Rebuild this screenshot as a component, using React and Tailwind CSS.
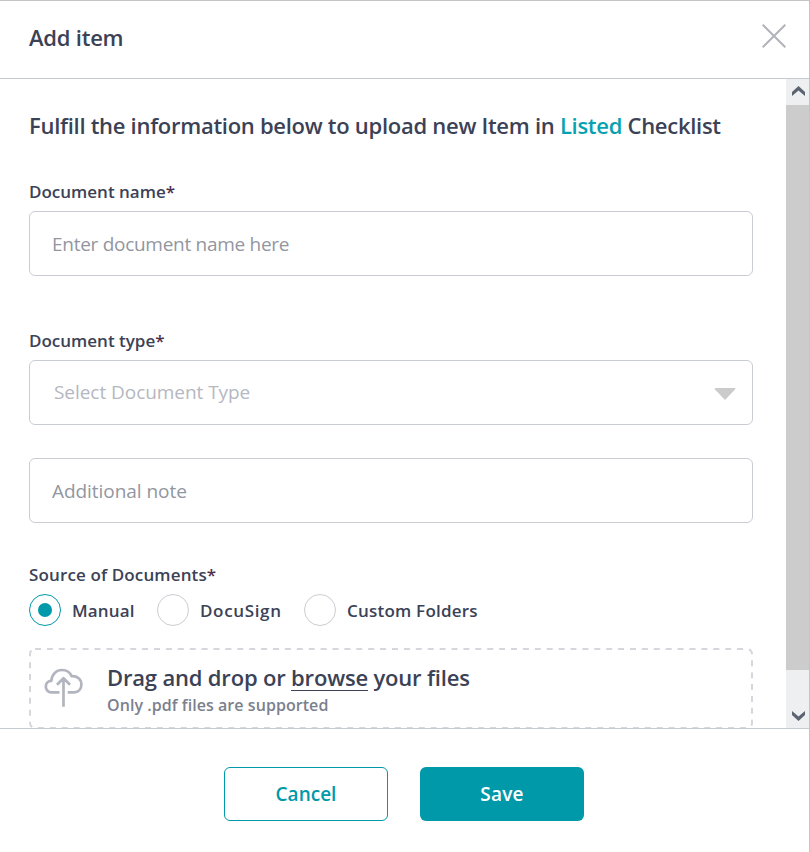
import React, { useState } from 'react';

const sources = [
  { id: 'manual', label: 'Manual', text: 'w-[62px] tracking-[0.15px]', gap: 'mr-[23px]' },
  { id: 'docusign', label: 'DocuSign', text: 'w-[82px] tracking-[0.65px]', gap: 'mr-[22px]' },
  { id: 'custom', label: 'Custom Folders', text: 'tracking-[0.22px]', gap: '' },
];

function CloudUpload() {
  return (
    <svg className="w-10 h-10 shrink-0" viewBox="0 0 40 40" fill="none" stroke="#b2b5bf" strokeWidth="2.7" strokeLinejoin="round">
      <path d="M16.500 24.300H8.300a5.500 5.500 0 0 1-5.500-5.500c0-3.400 2.400-6 5.500-6C9 6 13.500 2 18.900 2c4.500 0 8.200 2.600 9.700 6.200 5.700-.5 9.800 3.200 9.800 8.300 0 4.700-3 7.800-7.200 7.800h-6.500" />
      <path d="M20.500 38.700V11M14 16.800l6.500-6.500 6.500 6.500" />
    </svg>
  );
}

function Chevron({ down }) {
  return (
    <svg className={down ? 'w-[13px] h-[10px] rotate-180' : 'w-[13px] h-[10px]'} viewBox="0 0 13 10">
      <path d="M6.500 0 13 6v4L6.500 4.400 0 10V6Z" fill="#5c6370" />
    </svg>
  );
}

function Label({ children, className = '' }) {
  return (
    <div className={`text-[17px] leading-6 font-semibold ${className}`}>
      {children}<span className="text-[#4d2f4a]">*</span>
    </div>
  );
}

export default function App() {
  const [source, setSource] = useState('manual');

  return (
    <div className="w-[810px] h-[852px] flex flex-col bg-white border-t border-r border-[#c4c4c4] text-[#3b4256] font-['Open_Sans',sans-serif] overflow-hidden">
      {/* Header */}
      <header className="h-[78px] shrink-0 flex items-center justify-between pl-[29px] pr-[23px] pb-[8px] border-b border-[#c5cbd1]">
        <h1 className="text-[22px] leading-8 font-semibold tracking-[-0.22px] pt-[3px]">Add item</h1>
        <button aria-label="Close">
          <svg className="w-6 h-6" viewBox="0 0 24 24" stroke="#b2b3bb" strokeWidth="2">
            <path d="M.7.7l22.600 22.600M23.300.7.7 23.300" />
          </svg>
        </button>
      </header>

      {/* Scrollable body */}
      <div className="h-[649px] shrink-0 flex overflow-hidden">
        <main className="flex-1 pl-[29px] pr-[33px] pt-[30px] overflow-hidden">
          <h2 className="text-[22px] leading-8 font-semibold tracking-[-0.28px] whitespace-nowrap">
            Fulfill the information below to upload new Item in <span className="text-[#06a2b2]">Listed</span> Checklist
          </h2>

          <Label className="mt-[39px]">Document name</Label>
          <input
            className="block w-full h-[65px] mt-[7px] px-[22px] pt-px border border-[#c9cdd1] rounded-[6px] text-[19px] tracking-[-0.28px] placeholder:text-[#92969f] outline-none"
            placeholder="Enter document name here"
          />

          <Label className="mt-[53px]">Document type</Label>
          <button className="w-full h-[65px] mt-[7px] pl-6 pr-4 pb-px flex items-center justify-between border border-[#c9cdd1] rounded-[6px] text-[19px] tracking-[-0.05px] text-[#b5b8c0]">
            Select Document Type
            <svg className="w-[22px] h-3 mt-1" viewBox="0 0 22 12">
              <path d="M1 0h20q1 .7 0 1.500L11 12 1 1.500Q0 .7 1 0Z" fill="#cbcbcb" />
            </svg>
          </button>

          <input
            className="block w-full h-[65px] mt-[33px] px-[22px] pt-px border border-[#c9cdd1] rounded-[6px] text-[19px] tracking-[-0.05px] placeholder:text-[#92969f] outline-none"
            placeholder="Additional note"
          />

          <Label className="mt-10 tracking-[0.13px]">Source of Documents</Label>
          <div className="flex items-center h-8 mt-[7px]">
            {sources.map(s => (
              <button key={s.id} onClick={() => setSource(s.id)} className={`flex items-center ${s.gap}`}>
                <span className={`w-8 h-8 mr-[11px] rounded-full border flex items-center justify-center ${source === s.id ? 'border-[#0099a9]' : 'border-[#cacdd2]'}`}>
                  {source === s.id && <span className="w-3.5 h-3.5 rounded-full bg-[#0099a9]" />}
                </span>
                <span className={`text-[17px] leading-6 pt-0.5 font-semibold text-left whitespace-nowrap ${s.text}`}>{s.label}</span>
              </button>
            ))}
          </div>

          {/* Drop zone */}
          <div className="relative h-[81px] mt-[22px] pl-[14px] pt-[13px] flex items-start">
            <svg className="absolute inset-0 w-full h-full" viewBox="0 0 724 81" fill="none">
              <rect x="1" y="1" width="722" height="79" rx="5" stroke="#d6d7dc" strokeWidth="2" strokeDasharray="6 5.9" />
            </svg>
            <div className="pt-[7px]"><CloudUpload /></div>
            <div className="ml-6 whitespace-nowrap">
              <div className="text-[22px] leading-8 font-semibold tracking-[-0.18px]">
                Drag and drop or <span className="border-b border-[#3b4256] inline-block leading-[25px]">browse</span> your files
              </div>
              <div className="text-[16px] leading-5 mt-0.5 font-semibold tracking-[0.06px] text-[#7b808d]">Only .pdf files are supported</div>
            </div>
          </div>
        </main>

        {/* Scrollbar */}
        <div className="w-[23px] flex flex-col items-center bg-[#eeeff1]">
          <div className="h-[26px] shrink-0 pt-[7px] pl-[2px]"><Chevron /></div>
          <div className="h-[565px] w-full shrink-0 bg-[#cbcccb]" />
          <div className="flex-1 flex items-end pb-[7px] pl-[2px]"><Chevron down /></div>
        </div>
      </div>

      {/* Footer */}
      <footer className="flex-1 flex justify-center gap-8 pt-[38px] pr-px border-t border-[#c5cbd1] text-[19px] font-semibold">
        <button className="w-[164px] h-[54px] rounded-[6px] border border-[#0099a9] text-[#0099a9]">Cancel</button>
        <button className="w-[164px] h-[54px] rounded-[6px] bg-[#0099a9] text-white tracking-[0.2px]">Save</button>
      </footer>
    </div>
  );
}
